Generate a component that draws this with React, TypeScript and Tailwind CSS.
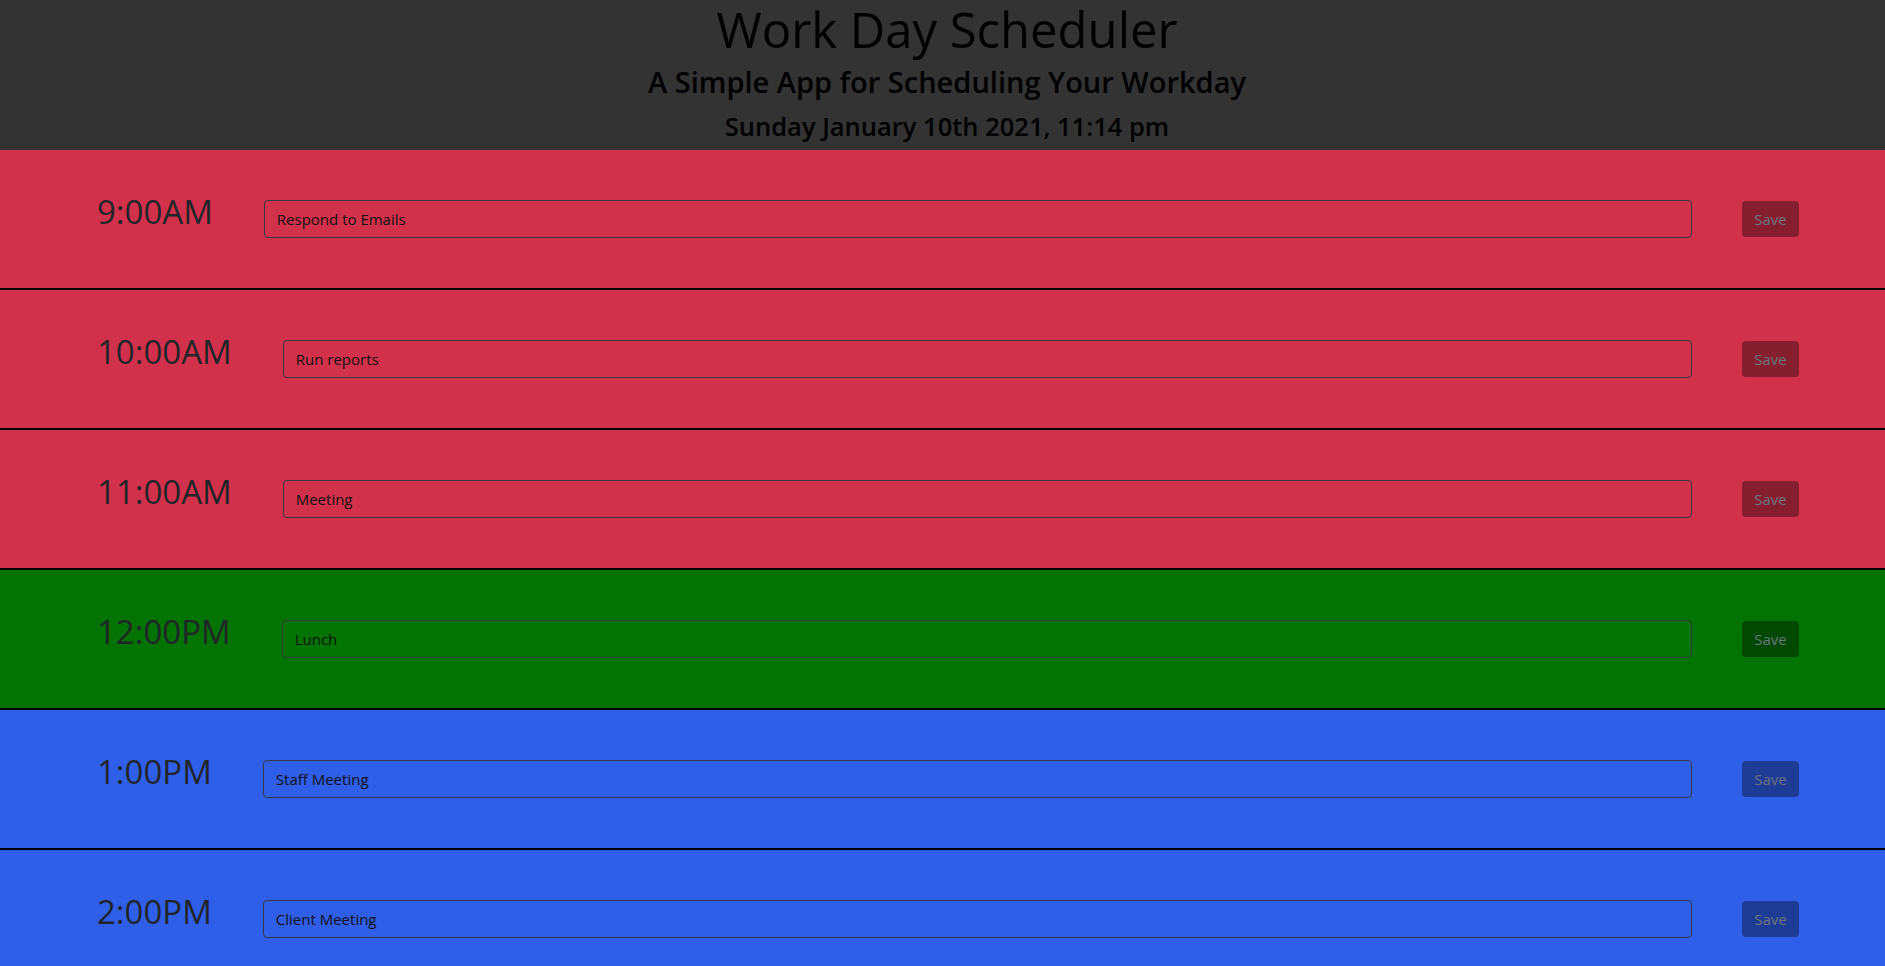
import { useState } from "react";

type Slot = {
  hour: string;
  text: string;
  status: "past" | "present" | "future";
};

const slots: Slot[] = [
  { hour: "9:00AM", text: "Respond to Emails", status: "past" },
  { hour: "10:00AM", text: "Run reports", status: "past" },
  { hour: "11:00AM", text: "Meeting", status: "past" },
  { hour: "12:00PM", text: "Lunch", status: "present" },
  { hour: "1:00PM", text: "Staff Meeting", status: "future" },
  { hour: "2:00PM", text: "Client Meeting", status: "future" },
  { hour: "3:00PM", text: "", status: "future" },
  { hour: "4:00PM", text: "", status: "future" },
  { hour: "5:00PM", text: "", status: "future" },
];

const rowColor = {
  past: "bg-[#d1314a]",
  present: "bg-[#037303]",
  future: "bg-[#2f5ee9]",
};

function TimeBlock({ slot }: { slot: Slot }) {
  const [value, setValue] = useState(slot.text);

  return (
    <div
      className={`flex items-start h-[140px] pt-[45px] pl-[97px] pr-[86px] border-b-2 border-black ${rowColor[slot.status]}`}
    >
      <div className="text-[33px] leading-none text-[#212529]">{slot.hour}</div>
      <input
        value={value}
        onChange={(e) => setValue(e.target.value)}
        className="flex-1 ml-[51px] mt-[5px] h-[38px] px-3 bg-transparent border border-[#343a40] rounded-[4px] text-[15px] text-[#111] outline-none"
      />
      <button className="ml-[50px] mt-[6px] w-[57px] h-[36px] rounded-[4px] bg-black/[0.36] text-[15px] text-[#6c757d]">
        Save
      </button>
    </div>
  );
}

export default function App() {
  return (
    <div className="min-h-screen bg-white font-['Open_Sans',sans-serif]">
      <header className="h-[150px] pt-[2px] pl-[9px] bg-[#333333] text-black text-center">
        <h1 className="text-[49px] leading-[54px] font-[450]">Work Day Scheduler</h1>
        <p className="text-[29px] leading-[52px] font-[550]">A Simple App for Scheduling Your Workday</p>
        <p className="text-[25.5px] leading-[37px] font-[550]">Sunday January 10th 2021, 11:14 pm</p>
      </header>

      <div>
        {slots.map((slot) => (
          <TimeBlock key={slot.hour} slot={slot} />
        ))}
      </div>
    </div>
  );
}
